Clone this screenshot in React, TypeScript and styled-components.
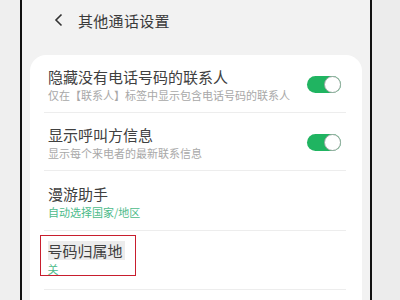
import styled, { createGlobalStyle } from 'styled-components';

const GlobalStyle = createGlobalStyle`
  html, body {
    margin: 0;
    padding: 0;
    background: #eeeeee;
  }
  body {
    font-family: "Noto Sans CJK SC", "Noto Sans", sans-serif;
  }
`;

const Frame = styled.div`
  display: flex;
  width: 400px;
  height: 300px;
  overflow: hidden;
`;

const SideStrip = styled.div<{ $side: 'left' | 'right' }>`
  width: ${(p) => (p.$side === 'left' ? '20px' : '28px')};
  background: ${(p) => (p.$side === 'left' ? '#efefef' : '#ececec')};
  border-${(p) => (p.$side === 'left' ? 'right' : 'left')}: 2px solid #111;
`;

const Screen = styled.div`
  flex: 1;
  background: #f2f2f2;
  display: flex;
  flex-direction: column;
  padding: 0 8px;
`;

const Header = styled.div`
  height: 40px;
  display: flex;
  align-items: center;
  gap: 14px;
  padding-left: 24px;
`;

const BackButton = styled.svg`
  width: 10px;
  height: 14px;
`;

const Title = styled.div`
  font-size: 15px;
  letter-spacing: 0.3px;
  color: #3a3a3a;
`;

const Card = styled.div`
  margin-top: 15px;
  background: #fff;
  border-radius: 16px 16px 0 0;
  flex: 1;
  display: flex;
  flex-direction: column;
`;

const Row = styled.div<{ $height?: number; $top?: boolean }>`
  height: ${(p) => p.$height ?? 58}px;
  display: flex;
  align-items: ${(p) => (p.$top ? 'flex-start' : 'center')};
  justify-content: space-between;
  padding: 0 21px 0 18px;
  position: relative;
  box-sizing: border-box;
  &::after {
    content: '';
    position: absolute;
    left: 14px;
    right: 16px;
    bottom: 0;
    height: 1px;
    background: #ededed;
  }
`;

const TextBlock = styled.div`
  display: flex;
  flex-direction: column;
  gap: 2px;
`;

const RowTitle = styled.div`
  font-size: 15px;
  line-height: 19px;
  color: #404040;
`;

const RowSub = styled.div<{ $accent?: boolean }>`
  font-size: 11px;
  line-height: 14px;
  color: ${(p) => (p.$accent ? '#4dbb8a' : '#a8a8a8')};
`;

const Marked = styled.div`
  margin-left: -8px;
  margin-top: 4px;
  padding: 5px 10px 0 6.5px;
  border: 1.5px solid #c81e2e;
  display: flex;
  flex-direction: column;
  align-items: flex-start;
  gap: 3px;
  & > div:last-child {
    line-height: 12px;
  }
`;

const Highlight = styled.div`
  display: inline-block;
  height: 19px;
  background: #ececec;
  padding-right: 2px;
  overflow: hidden;
`;

const Track = styled.div<{ $on: boolean }>`
  width: 34px;
  height: 17px;
  border-radius: 9px;
  background: ${(p) => (p.$on ? '#20b461' : '#ccc')};
  position: relative;
`;

const Thumb = styled.div`
  position: absolute;
  right: 0;
  top: 0;
  width: 17px;
  height: 17px;
  box-sizing: border-box;
  border-radius: 50%;
  background: #fff;
  border: 1.5px solid #9aa7a0;
`;

const Toggle = ({ on }: { on: boolean }) => (
  <Track $on={on}>
    <Thumb />
  </Track>
);

export default function App() {
  return (
    <>
      <GlobalStyle />
      <Frame>
        <SideStrip $side="left" />
        <Screen>
          <Header>
            <BackButton viewBox="0 0 10 14">
              <path d="M7.5 1.5 L2 7 L7.5 12.5" fill="none" stroke="#333" strokeWidth="1.6" />
            </BackButton>
            <Title>其他通话设置</Title>
          </Header>
          <Card>
            <Row>
              <TextBlock>
                <RowTitle>隐藏没有电话号码的联系人</RowTitle>
                <RowSub>仅在【联系人】标签中显示包含电话号码的联系人</RowSub>
              </TextBlock>
              <Toggle on />
            </Row>
            <Row>
              <TextBlock>
                <RowTitle>显示呼叫方信息</RowTitle>
                <RowSub>显示每个来电者的最新联系信息</RowSub>
              </TextBlock>
              <Toggle on />
            </Row>
            <Row $height={60}>
              <TextBlock>
                <RowTitle>漫游助手</RowTitle>
                <RowSub $accent>自动选择国家/地区</RowSub>
              </TextBlock>
            </Row>
            <Row $height={59} $top>
              <Marked>
                <RowTitle as={Highlight}>号码归属地</RowTitle>
                <RowSub $accent>关</RowSub>
              </Marked>
            </Row>
          </Card>
        </Screen>
        <SideStrip $side="right" />
      </Frame>
    </>
  );
}
